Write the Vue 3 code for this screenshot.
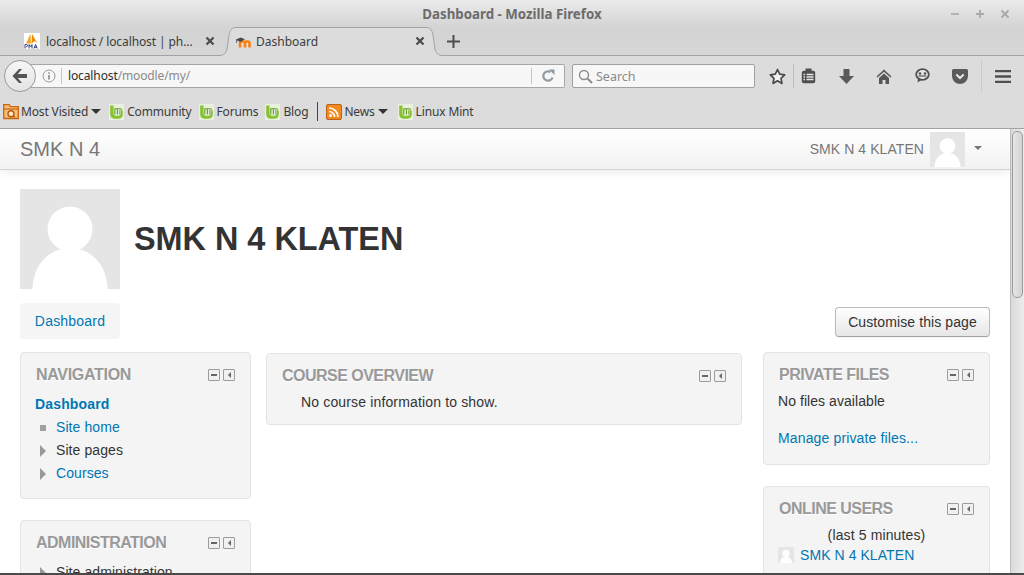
<script setup>
const bookmarks = [
  { label: 'Community' },
  { label: 'Forums' },
  { label: 'Blog' },
]
const navItems = [
  { label: 'Site home', kind: 'square', link: true },
  { label: 'Site pages', kind: 'tri', link: false },
  { label: 'Courses', kind: 'tri', link: true },
]
</script>

<template>
  <div class="screen">
    <header class="chrome">
      <div class="titlebar">
        <span class="title">Dashboard - Mozilla Firefox</span>
        <div class="wm">
          <svg width="10" height="10" viewBox="0 0 10 10"><path d="M1 5h8" stroke="#a8a8a8" stroke-width="1.6"/></svg>
          <svg width="10" height="10" viewBox="0 0 10 10"><path d="M1 5h8M5 1v8" stroke="#a8a8a8" stroke-width="1.8"/></svg>
          <svg width="10" height="10" viewBox="0 0 10 10"><path d="M1.5 1.5l7 7M8.5 1.5l-7 7" stroke="#a8a8a8" stroke-width="1.8"/></svg>
        </div>
      </div>
      <div class="tabs">
        <div class="tab first">
          <svg class="fav" width="16" height="16" viewBox="0 0 16 16">
            <rect width="16" height="16" fill="#fff"/>
            <path d="M2 10.5C4 7 5 3 6.5 1L7 10.5z" fill="#f5a623"/>
            <path d="M7.5 10.5L8 1c1.5 2 3 6 6 9.5L11 8z" fill="#f08c00"/>
            <rect x="0.5" y="11.5" width="15" height="4" fill="#fff"/>
            <path d="M1 15.5v-4h1.6c1.2 0 1.2 2.2 0 2.2H2M5 15.5v-4l1.5 2.4L8 11.5v4M10 15.5l1.6-4 1.6 4M10.7 14.3h1.8" stroke="#2f3a7d" stroke-width="1" fill="none"/>
          </svg>
          <span class="tab-label">localhost / localhost | ph...</span>
          <svg class="close" width="10" height="10" viewBox="0 0 10 10"><path d="M1.5 1.5l7 7M8.5 1.5l-7 7" stroke="#4a4a4a" stroke-width="2.2"/></svg>
        </div>
        <div class="tab active">
          <svg class="tab-shape" width="224" height="30" viewBox="0 0 224 30">
            <path d="M0 28.500C5 28.500 7 26 8 22L10 8C11 3 13 .5 17 .5H207C211 .5 213 3 214 8L216 22C217 26 219 28.500 224 28.500V30H0z" fill="#dcdcdc"/>
            <path d="M0 28.500C5 28.500 7 26 8 22L10 8C11 3 13 .5 17 .5H207C211 .5 213 3 214 8L216 22C217 26 219 28.500 224 28.500" fill="none" stroke="#a3a3a3"/>
          </svg>
          <svg class="fav" width="16" height="16" viewBox="0 0 16 16">
            <path d="M4 14.500V10.200c0-1 1-1.700 2-1.700h1.500c1 0 1.500.7 1.500 1.700v4.300M9 10.200c0-1 1-1.700 2-1.700h1c1 0 1.500.7 1.500 1.700v4.300" fill="none" stroke="#f98012" stroke-width="2.600"/>
            <path d="M-.5 6.800L4.500 4.500l4.500 1.800-4.500 2.700z" fill="#4a4a4a"/>
            <path d="M.5 7v3" stroke="#666" stroke-width=".9"/>
          </svg>
          <span class="tab-label">Dashboard</span>
          <svg class="close" width="10" height="10" viewBox="0 0 10 10"><path d="M1.5 1.5l7 7M8.5 1.5l-7 7" stroke="#4a4a4a" stroke-width="2.2"/></svg>
        </div>
        <svg class="newtab" width="13" height="13" viewBox="0 0 13 13"><path d="M0 6.500h13M6.500 0v13" stroke="#4d4d4d" stroke-width="2"/></svg>
      </div>
    </header>

    <div class="toolbar">
      <div class="back">
        <svg width="18" height="16" viewBox="0 0 18 16"><path d="M8 1L1.500 8 8 15h3L6.800 10H16V6H6.800L11 1z" fill="#555"/></svg>
      </div>
      <div class="urlbar">
        <svg class="info" width="14" height="14" viewBox="0 0 14 14"><circle cx="7" cy="7" r="6" fill="none" stroke="#9a9a9a"/><path d="M7 6v4.500" stroke="#8a8a8a" stroke-width="1.600"/><path d="M7 3.200v1.600" stroke="#8a8a8a" stroke-width="1.600"/></svg>
        <span class="url"><span class="host">localhost</span>/moodle/my/</span>
        <span class="reload">
          <svg width="14" height="14" viewBox="0 0 14 14"><path d="M11.500 8.500A4.700 4.700 0 1 1 9.500 3" fill="none" stroke="#8f9aa3" stroke-width="2.200"/><path d="M8 .5h5.500v5.500z" fill="#8f9aa3"/></svg>
        </span>
      </div>
      <div class="search">
        <svg width="15" height="15" viewBox="0 0 15 15"><circle cx="6" cy="6" r="4.500" fill="none" stroke="#8c8c8c" stroke-width="1.400"/><path d="M9.500 9.500l4.500 4.500" stroke="#8c8c8c" stroke-width="2"/></svg>
        <span>Search</span>
      </div>
      <div class="tools">
        <span class="tool star">
          <svg width="17" height="17" viewBox="0 0 17 17"><path d="M8.500 1.500l2.200 4.700 5 .6-3.700 3.500 1 5.100-4.500-2.600-4.500 2.600 1-5.100L1.300 6.800l5-.6z" fill="#f2f2f2" stroke="#4b4b4b" stroke-width="1.700" stroke-linejoin="round"/></svg>
        </span>
        <span class="tool clip">
          <svg width="15" height="16" viewBox="0 0 15 16"><rect x=".8" y="2.800" width="13.400" height="12.400" rx="2" fill="#4f4f4f"/><rect x="4.500" y=".5" width="6" height="3" fill="#4f4f4f"/><path d="M5.500 6.500h7M5.500 9h7M5.500 11.500h7" stroke="#e6e6e6" stroke-width="1.300"/><path d="M2.500 6.500h1.500M2.500 9h1.500M2.500 11.500h1.500" stroke="#e6e6e6" stroke-width="1.300"/></svg>
        </span>
        <span class="tool">
          <svg width="15" height="15" viewBox="0 0 15 15"><path d="M4.500 0h6v7H15l-7.500 8L0 7h4.500z" fill="#5a5a5a"/></svg>
        </span>
        <span class="tool">
          <svg width="16" height="15" viewBox="0 0 16 15"><path d="M8 .5L.5 7.500 1.500 8.500 8 2.700l6.500 5.800 1-1z" fill="#565656"/><path d="M3 9L8 4.500 13 9v6H9.500v-4h-3v4H3z" fill="#565656"/></svg>
        </span>
        <span class="tool">
          <svg width="15" height="16" viewBox="0 0 15 16"><ellipse cx="7.500" cy="6.500" rx="6.300" ry="5.300" fill="#e8e8e8" stroke="#4f4f4f" stroke-width="1.800"/><circle cx="5" cy="5.500" r="1.300" fill="#4f4f4f"/><circle cx="10" cy="5.500" r="1.300" fill="#4f4f4f"/><path d="M3.500 8h8" stroke="#4f4f4f" stroke-width="1.200"/><path d="M3 11l-.5 3.500L6.500 12z" fill="#4f4f4f"/></svg>
        </span>
        <span class="tool pocket">
          <svg width="16" height="15" viewBox="0 0 16 15"><path d="M1.500 0h13A1.500 1.500 0 0 1 16 1.500V7a8 8 0 0 1-16 0V1.500A1.500 1.500 0 0 1 1.500 0z" fill="#5a5a5a"/><path d="M4.300 5.500L8 9l3.700-3.500" fill="none" stroke="#e8e8e8" stroke-width="2"/></svg>
        </span>
        <span class="tool menu">
          <svg width="16" height="13" viewBox="0 0 16 13"><path d="M0 1.200h16M0 6.500h16M0 11.800h16" stroke="#4f4f4f" stroke-width="2.300"/></svg>
        </span>
      </div>
    </div>

    <div class="bookmarks">
      <span class="bm first">
        <svg width="16" height="17" viewBox="0 0 16 17"><path d="M.7 15.500V1.700h5.500l1.300 2h7.800v11.800z" fill="#f6bd78" stroke="#c9650f" stroke-width="1.300"/><path d="M.7 6h14.600" stroke="#c9650f" stroke-width="1.200"/><circle cx="8" cy="10.700" r="3" fill="#fbe3c4" stroke="#b65a12" stroke-width="1.400"/><path d="M10 13l2 1.500" stroke="#b65a12" stroke-width="1.500"/></svg>
        Most Visited<i class="arrow"></i>
      </span>
      <span v-for="b in bookmarks" :key="b.label" class="bm">
        <svg class="mint" width="15" height="16" viewBox="0 0 15 16"><rect width="15" height="16" fill="#e9f0dd"/><path d="M1.200 1.500h3.300v7.800c0 1.500 1 2.500 2.500 2.500h2.500c1.500 0 2.500-1 2.500-2.500V6.500h1.800v3.800c0 2.800-1.500 4.400-4.300 4.400H5.500c-2.800 0-4.300-1.600-4.300-4.400z" fill="#86c232"/><path d="M5.800 10.500V4.800h5.500c1 0 1.300.5 1.300 1.200M8.400 10.500V5.200M10.900 10.500V6" fill="none" stroke="#5fa01e" stroke-width="1.100"/></svg>
        {{ b.label }}
      </span>
      <span class="bm-sep"></span>
      <span class="bm news">
        <svg width="16" height="16" viewBox="0 0 16 16"><rect x=".5" y=".5" width="15" height="15" rx="1.500" fill="#f28a1e" stroke="#b7611a"/><circle cx="4.500" cy="11.500" r="1.500" fill="#fff"/><path d="M3 7.500a5.500 5.500 0 0 1 5.500 5.500M3 4a9 9 0 0 1 9 9" fill="none" stroke="#fff" stroke-width="1.700"/></svg>
        News<i class="arrow"></i>
      </span>
      <span class="bm">
        <svg class="mint" width="15" height="16" viewBox="0 0 15 16"><rect width="15" height="16" fill="#e9f0dd"/><path d="M1.200 1.500h3.300v7.800c0 1.500 1 2.500 2.500 2.500h2.500c1.500 0 2.500-1 2.500-2.500V6.500h1.800v3.800c0 2.800-1.500 4.400-4.300 4.400H5.500c-2.800 0-4.300-1.600-4.300-4.400z" fill="#86c232"/><path d="M5.800 10.500V4.800h5.500c1 0 1.300.5 1.300 1.200M8.400 10.500V5.200M10.900 10.500V6" fill="none" stroke="#5fa01e" stroke-width="1.100"/></svg>
        Linux Mint
      </span>
    </div>

    <div class="viewport">
      <div class="page">
        <nav class="navbar">
          <a class="brand">SMK N 4</a>
          <div class="usermenu">
            <span class="username">SMK N 4 KLATEN</span>
            <svg class="nav-avatar" width="35" height="35" viewBox="0 0 100 100"><rect width="100" height="100" fill="#e5e5e5"/><circle cx="50" cy="40" r="22.500" fill="#fff"/><path d="M12.500 100C13 75 30 59 50 59S87 75 87.500 100z" fill="#fff"/></svg>
            <i class="caret"></i>
          </div>
        </nav>

        <div class="content">
          <div class="heading">
            <svg width="100" height="100" viewBox="0 0 100 100"><rect width="100" height="100" fill="#e5e5e5"/><circle cx="50" cy="40" r="22.500" fill="#fff"/><path d="M12.500 100C13 75 30 59 50 59S87 75 87.500 100z" fill="#fff"/></svg>
            <h1>SMK N 4 KLATEN</h1>
          </div>

          <div class="tabrow">
            <a class="dash-tab">Dashboard</a>
            <button class="customise">Customise this page</button>
          </div>

          <div class="columns">
            <aside class="col">
              <section class="block nav-block">
                <div class="block-head">
                  <h2>Navigation</h2>
                  <div class="block-ctl">
                    <span class="ctl"><i class="dash"></i></span>
                    <span class="ctl"><i class="tri-left"></i></span>
                  </div>
                </div>
                <a class="root">Dashboard</a>
                <ul class="tree">
                  <li v-for="item in navItems" :key="item.label">
                    <i :class="item.kind"></i>
                    <a :class="{ plain: !item.link }">{{ item.label }}</a>
                  </li>
                </ul>
              </section>
              <section class="block admin-block">
                <div class="block-head">
                  <h2>Administration</h2>
                  <div class="block-ctl">
                    <span class="ctl"><i class="dash"></i></span>
                    <span class="ctl"><i class="tri-left"></i></span>
                  </div>
                </div>
                <ul class="tree">
                  <li><i class="tri"></i><a class="plain">Site administration</a></li>
                </ul>
              </section>
            </aside>

            <main class="col center">
              <section class="block overview">
                <div class="block-head">
                  <h2>Course overview</h2>
                  <div class="block-ctl">
                    <span class="ctl"><i class="dash"></i></span>
                    <span class="ctl"><i class="tri-left"></i></span>
                  </div>
                </div>
                <p class="none">No course information to show.</p>
              </section>
            </main>

            <aside class="col right">
              <section class="block files">
                <div class="block-head">
                  <h2>Private files</h2>
                  <div class="block-ctl">
                    <span class="ctl"><i class="dash"></i></span>
                    <span class="ctl"><i class="tri-left"></i></span>
                  </div>
                </div>
                <p class="nofiles">No files available</p>
                <a class="manage">Manage private files...</a>
              </section>
              <section class="block online">
                <div class="block-head">
                  <h2>Online users</h2>
                  <div class="block-ctl">
                    <span class="ctl"><i class="dash"></i></span>
                    <span class="ctl"><i class="tri-left"></i></span>
                  </div>
                </div>
                <p class="last">(last 5 minutes)</p>
                <div class="user">
                  <svg width="16" height="16" viewBox="0 0 100 100"><rect width="100" height="100" fill="#e5e5e5"/><circle cx="50" cy="40" r="22.500" fill="#fff"/><path d="M12.500 100C13 75 30 59 50 59S87 75 87.500 100z" fill="#fff"/></svg>
                  <a>SMK N 4 KLATEN</a>
                </div>
              </section>
            </aside>
          </div>
        </div>
      </div>
      <div class="scrollbar"><div class="thumb"></div></div>
    </div>
    <div class="edge"></div>
  </div>
</template>

<style>
html, body { margin: 0; overflow: hidden; }
</style>

<style scoped>
.screen {
  width: 1024px;
  height: 575px;
  display: flex;
  flex-direction: column;
  overflow: hidden;
  font-family: "Noto Sans", sans-serif;
  font-size: 12px;
  background: #dcdcdc;
  color: #333;
}
.chrome {
  height: 56px;
  flex: none;
  box-sizing: border-box;
  border-bottom: 1px solid #a3a3a3;
  background: linear-gradient(#ebebeb, #d3d3d3 28px, #d6d6d6);
}
.titlebar {
  height: 27px;
  position: relative;
  display: flex;
  align-items: center;
  justify-content: center;
}
.title {
  font-weight: 700;
  font-size: 13.3px;
  color: #6c6c6c;
  margin-top: 1px;
}
.wm {
  position: absolute;
  right: 14px;
  top: 9px;
  display: flex;
  gap: 15px;
}
.tabs {
  height: 28px;
  display: flex;
  align-items: center;
}
.tab {
  height: 28px;
  display: flex;
  align-items: center;
  position: relative;
  font-size: 12px;
  color: #3c3c3c;
  white-space: nowrap;
}
.tab.first {
  width: 222px;
  box-sizing: border-box;
  padding-left: 24px;
}
.tab.first .tab-label { margin-left: 6px; width: 156px; letter-spacing: -.1px; }
.tab.active {
  width: 218px;
  box-sizing: border-box;
  padding-left: 14px;
}
.tab.active .tab-label { margin-left: 4px; width: 156px; position: relative; }
.tab.active .fav, .tab.active .close { position: relative; }
.tab-shape { position: absolute; left: -3px; top: 0; }
.close { margin-left: 3px; flex: none; }
.newtab { margin-left: 7px; }

.toolbar {
  height: 39px;
  flex: none;
  display: flex;
  align-items: center;
  padding-left: 4px;
  padding-top: 1px;
  box-sizing: border-box;
  background: #dcdcdc;
}
.back {
  width: 30px;
  height: 30px;
  border: 1px solid #9a9a9a;
  border-radius: 50%;
  background: linear-gradient(#f6f6f6, #e4e4e4);
  display: flex;
  align-items: center;
  justify-content: center;
  position: relative;
  z-index: 1;
  margin-right: -6px;
  flex: none;
}
.urlbar {
  width: 535px;
  height: 24px;
  box-sizing: border-box;
  border: 1px solid #a6a6a6;
  border-left: 0;
  border-radius: 0 2px 2px 0;
  background: #f7f7f7;
  display: flex;
  align-items: center;
  padding-left: 12px;
  font-size: 12px;
  letter-spacing: -.12px;
  flex: none;
}
.info { flex: none; }
.url {
  margin-left: 5px;
  padding-left: 6px;
  border-left: 1px solid #c6c6c6;
  height: 16px;
  line-height: 15px;
  color: #8a8a8a;
  flex: 1;
}
.host { color: #2e2e2e; }
.reload {
  width: 32px;
  height: 16px;
  border-left: 1px solid #c6c6c6;
  display: flex;
  align-items: center;
  justify-content: center;
  flex: none;
}
.search {
  width: 183px;
  height: 24px;
  box-sizing: border-box;
  margin-left: 7px;
  border: 1px solid #a0a0a0;
  border-radius: 2px;
  background: #f7f7f7;
  display: flex;
  align-items: center;
  padding-left: 5px;
  gap: 3px;
  color: #8a8a8a;
  font-size: 12.5px;
  flex: none;
}
.tools {
  display: flex;
  align-items: center;
  margin-left: 6px;
  height: 24px;
}
.tool {
  width: 38px;
  height: 24px;
  display: flex;
  align-items: center;
  justify-content: center;
  flex: none;
}
.tool.star { width: 32px; border-right: 1px solid #bdbdbd; }
.tool.clip { width: 28px; margin-right: 5px; }
.tool.pocket { margin-right: 2px; }
.tool.menu { width: 42px; box-sizing: border-box; border-left: 1px solid #cacaca; height: 34px; }

.bookmarks {
  height: 34px;
  flex: none;
  box-sizing: border-box;
  border-bottom: 1px solid #a3a3a3;
  display: flex;
  align-items: center;
  padding-left: 3px;
  font-size: 12px;
  letter-spacing: -.15px;
  color: #3a3a3a;
  background: #dcdcdc;
}
.bm {
  display: flex;
  align-items: center;
  gap: 2px;
  margin-right: 7px;
  white-space: nowrap;
}
.bm.first { margin-right: 8px; }
.bm .mint { margin-right: 1px; }
.arrow {
  display: inline-block;
  width: 0;
  height: 0;
  border-left: 5px solid transparent;
  border-right: 5px solid transparent;
  border-top: 5px solid #333;
  margin-left: 1px;
}
.bm-sep {
  width: 1px;
  height: 19px;
  background: #444;
  margin: 0 8px 0 2px;
}
.bm.news { margin-right: 10px; }

.viewport {
  flex: 1;
  min-height: 0;
  display: flex;
  background: #fff;
  font-family: "Liberation Sans", Arial, sans-serif;
  font-size: 14px;
}
.page {
  width: 1010px;
  flex: none;
  overflow: hidden;
}
.navbar {
  height: 41px;
  box-sizing: border-box;
  border-bottom: 1px solid #d4d4d4;
  background: linear-gradient(#fff, #f2f2f2);
  box-shadow: 0 1px 10px rgba(0,0,0,.1);
  display: flex;
  align-items: center;
  justify-content: space-between;
  padding: 0 28px 0 20px;
  color: #777;
  position: relative;
}
.brand { font-size: 20px; color: #777; }
.username { letter-spacing: .07px; }
.usermenu { display: flex; align-items: center; }
.nav-avatar { margin-left: 6px; }
.caret {
  width: 0;
  height: 0;
  border-left: 4px solid transparent;
  border-right: 4px solid transparent;
  border-top: 4px solid #777;
  margin: -3px 0 0 9px;
}
.content { padding: 19px 20px 0; }
.heading { display: flex; align-items: center; height: 100px; }
.heading h1 {
  margin: 0 0 0 14px;
  font-size: 32.4px;
  line-height: 40px;
  font-weight: 700;
  color: #333;
}
.tabrow {
  height: 36px;
  margin-top: 14px;
  display: flex;
  justify-content: space-between;
}
.dash-tab {
  width: 100px;
  height: 36px;
  box-sizing: border-box;
  background: #f5f5f5;
  border-radius: 4px;
  color: #0077b3;
  line-height: 36px;
  text-align: center;
  letter-spacing: .2px;
}
.customise {
  width: 155px;
  height: 30px;
  margin-top: 4px;
  box-sizing: border-box;
  padding: 0;
  border: 1px solid #bbb;
  border-bottom-color: #a2a2a2;
  border-radius: 4px;
  background: linear-gradient(#fff, #e6e6e6);
  box-shadow: inset 0 1px 0 rgba(255,255,255,.2), 0 1px 2px rgba(0,0,0,.05);
  color: #333;
  font: 14px "Liberation Sans", Arial, sans-serif;
  letter-spacing: .1px;
}
.columns {
  display: grid;
  grid-template-columns: 231px 476px 233px;
  column-gap: 15px;
  margin-top: 13px;
}
.columns .right { margin-left: 6px; }
.columns .center { margin-top: 1px; }
.block {
  box-sizing: border-box;
  background: #f4f4f4;
  border: 1px solid #e3e3e3;
  border-radius: 4px;
  padding: 10px 15px 0;
}
.block-head {
  display: flex;
  justify-content: space-between;
  align-items: flex-start;
  height: 26px;
}
.block h2 {
  margin: 0;
  font-size: 16px;
  line-height: 23px;
  font-weight: 700;
  letter-spacing: -.52px;
  text-transform: uppercase;
  color: #999;
  text-shadow: 0 1px 0 #fff;
}
.nav-block h2 { letter-spacing: -.3px; }
.block-ctl { display: flex; gap: 3px; margin-top: 6px; }
.ctl {
  width: 12px;
  height: 12px;
  box-sizing: border-box;
  border: 1px solid #9c9c9c;
  border-radius: 1px;
  background: #f0f0f0;
  display: flex;
  align-items: center;
  justify-content: center;
}
.dash { width: 6px; height: 2px; background: #666; }
.tri-left {
  width: 0;
  height: 0;
  border-top: 3px solid transparent;
  border-bottom: 3px solid transparent;
  border-right: 3px solid #666;
}
.block a { color: #0077b3; }
.nav-block { height: 147px; }
.root { display: block; font-weight: 700; line-height: 23px; margin-top: 4px; margin-left: -1px; letter-spacing: .15px; }
.tree { list-style: none; margin: 0; padding: 0; letter-spacing: .08px; }
.tree li {
  height: 23px;
  line-height: 23px;
  display: flex;
  align-items: center;
  color: #333;
}
.tree li a { margin-left: 10px; }
.tree li a.plain { color: #333; }
.square { width: 6px; height: 6px; background: #a0a0a0; margin-left: 4px; flex: none; }
.tri {
  width: 0;
  height: 0;
  border-top: 6px solid transparent;
  border-bottom: 6px solid transparent;
  border-left: 6px solid #999;
  margin-left: 4px;
  flex: none;
}
.admin-block { margin-top: 21px; height: 120px; }
.admin-block .tree { margin-top: 4px; }
.overview { height: 72px; }
.none { margin: 2px 0 0 19px; line-height: 20px; letter-spacing: .15px; }
.files { height: 113px; }
.nofiles { margin: 0 0 0 -1px; line-height: 24px; letter-spacing: .06px; }
.manage { display: block; margin: 15px 0 0 -1px; line-height: 20px; letter-spacing: .14px; }
.online { margin-top: 21px; height: 120px; }
.last { margin: 2px 0 0; line-height: 20px; text-align: center; letter-spacing: .13px; }
.user { display: flex; align-items: center; margin: 0 0 0 -1px; line-height: 20px; }
.user a { margin-left: 6px; letter-spacing: .07px; }
.scrollbar {
  width: 14px;
  flex: none;
  box-sizing: border-box;
  border-left: 1px solid #bdbdbd;
  background: linear-gradient(90deg, #dadada, #ececec);
  padding: 2px 1px 0 1px;
}
.thumb {
  height: 167px;
  box-sizing: border-box;
  border: 1px solid #9c9c9c;
  border-radius: 5px;
  background: linear-gradient(90deg, #e6e6e6, #d2d2d2);
}
.edge { height: 2px; flex: none; background: #4a4a4a; }
</style>
